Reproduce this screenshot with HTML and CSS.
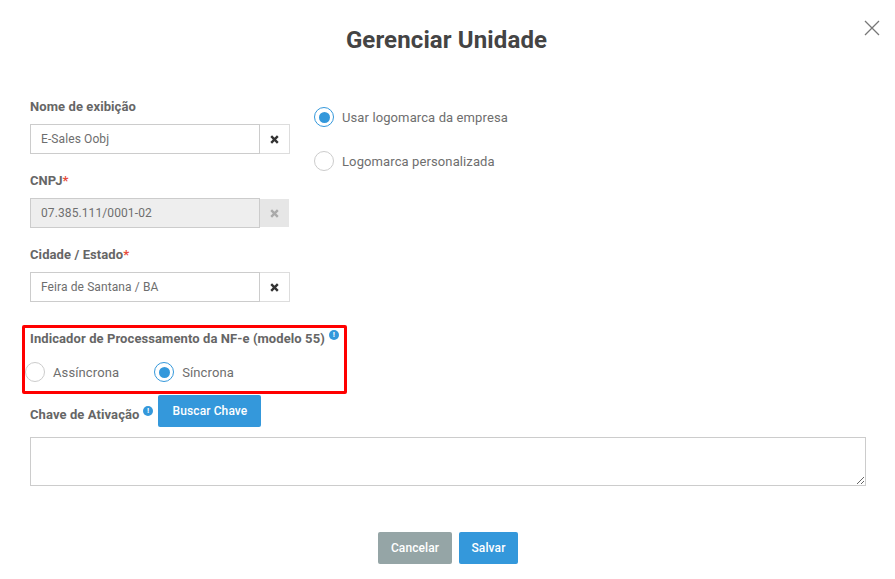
FILE: index.html
```html
<!DOCTYPE html>
<html lang="pt-BR">
<head>
<meta charset="utf-8">
<title>Gerenciar Unidade</title>
<link rel="stylesheet" href="styles.css">
</head>
<body>
<main class="modal">
  <button class="close" aria-label="Fechar">
    <svg width="16" height="16" viewBox="0 0 16 16"><path d="M1 1 15 15M15 1 1 15" stroke="#777" stroke-width="1.3" fill="none"/></svg>
  </button>
  <h1 class="title">Gerenciar Unidade</h1>
  <div class="top">
    <div class="fields">
      <div class="field">
        <label class="label">Nome de exibição</label>
        <div class="group">
          <div class="input">E-Sales Oobj</div>
          <div class="clear"><svg width="9" height="9" viewBox="0 0 9 9"><path d="M1.2 1.2 7.8 7.8M7.8 1.2 1.2 7.8" stroke="#333" stroke-width="2.4"/></svg></div>
        </div>
      </div>
      <div class="field">
        <label class="label">CNPJ<span class="req">*</span></label>
        <div class="group disabled">
          <div class="input">07.385.111/0001-02</div>
          <div class="clear"><svg width="9" height="9" viewBox="0 0 9 9"><path d="M1.2 1.2 7.8 7.8M7.8 1.2 1.2 7.8" stroke="#aaa" stroke-width="2.4"/></svg></div>
        </div>
      </div>
      <div class="field">
        <label class="label">Cidade / Estado<span class="req">*</span></label>
        <div class="group">
          <div class="input">Feira de Santana / BA</div>
          <div class="clear"><svg width="9" height="9" viewBox="0 0 9 9"><path d="M1.2 1.2 7.8 7.8M7.8 1.2 1.2 7.8" stroke="#333" stroke-width="2.4"/></svg></div>
        </div>
      </div>
    </div>
    <div class="logos">
      <div class="option"><span class="radio on"></span><span>Usar logomarca da empresa</span></div>
      <div class="option"><span class="radio"></span><span>Logomarca personalizada</span></div>
    </div>
  </div>
  <section class="marked">
    <div class="label marked-label">Indicador de Processamento da NF-e (modelo 55)<span class="info up">!</span></div>
    <div class="choices">
      <div class="option"><span class="radio"></span><span>Assíncrona</span></div>
      <div class="option"><span class="radio on"></span><span>Síncrona</span></div>
    </div>
  </section>
  <div class="key-row">
    <span class="label key-label">Chave de Ativação</span><span class="info">!</span>
    <button class="btn blue key-btn">Buscar Chave</button>
  </div>
  <textarea class="area"></textarea>
  <div class="actions">
    <button class="btn grey">Cancelar</button>
    <button class="btn blue">Salvar</button>
  </div>
</main>
</body>
</html>
```
FILE: styles.css
```css
* { box-sizing: border-box; }
html, body { margin: 0; height: 100%; background: #fff; }
body { font-family: Roboto, "Liberation Sans", sans-serif; color: #666; font-size: 13px; overflow: hidden; }
.modal { position: relative; width: 895px; height: 579px; padding: 25px 29px 0 30px; }
.close { position: absolute; top: 20px; right: 15px; padding: 0; border: 0; background: none; line-height: 0; }
.title { margin: 0; height: 30px; line-height: 30px; padding-right: 3px; text-align: center; font-size: 24px; font-weight: 700; color: #444; letter-spacing: .12px; }
.top { display: flex; margin-top: 44px; }
.fields { width: 260px; display: flex; flex-direction: column; gap: 19px; }
.label { font-weight: 700; font-size: 13px; line-height: 16px; color: #666; letter-spacing: .09px; }
.field .label { display: block; height: 16px; margin-bottom: 9px; }
.req { color: #e74c3c; }
.group { display: flex; height: 30px; }
.input { width: 230px; border: 1px solid #ccc; padding: 0 10px; line-height: 28px; font-size: 12px; color: #6e6e6e; letter-spacing: .1px; }
.clear { width: 30px; border: 1px solid #ddd; border-left: 0; display: flex; align-items: center; justify-content: center; }
.disabled .input { background: #eee; }
.disabled .clear { background: #e6e6e6; border-color: #e6e6e6; width: 29px; height: 28px; margin-top: 1px; }
.logos { margin-left: 24px; padding-top: 8px; display: flex; flex-direction: column; gap: 24px; }
.option { display: flex; align-items: center; gap: 8px; height: 20px; font-size: 13px; color: #6e6e6e; letter-spacing: .11px; }
.radio { width: 20px; height: 20px; border-radius: 50%; border: 1px solid #ccc; background: #fff; flex: none; display: flex; align-items: center; justify-content: center; }
.radio.on { border-color: #3498db; }
.radio.on::after { content: ""; width: 11px; height: 11px; border-radius: 50%; background: #3498db; }
.marked { width: 325px; height: 69px; margin: 23px 0 0 -8px; border: 3px solid #f00; border-radius: 2px; padding: 3px 0 0 5px; }
.marked-label { display: flex; align-items: flex-start; height: 16px; }
.info { display: inline-block; width: 10px; height: 10px; border-radius: 50%; background: #3498db; color: #fff; font-size: 8px; line-height: 10px; font-weight: 700; text-align: center; }
.info.up { margin: -1px 0 0 4px; }
.choices { display: flex; gap: 35px; margin: 15px 0 0 -5px; }
.key-row { display: flex; align-items: center; height: 32px; margin-top: 1px; }
.key-label { margin-top: 7px; }
.key-row .info { margin: 0 0 0 3.5px; }
.key-btn { width: 103px; margin: 0 0 0 5.5px; }
.btn { height: 32px; border: 0; border-radius: 2px; color: #fff; font: 500 12px Roboto, "Liberation Sans", sans-serif; letter-spacing: .1px; padding: 0; }
.btn.blue { background: #3498db; }
.btn.grey { background: #95a5a6; width: 74px; }
.area { display: block; width: 836px; height: 49px; margin-top: 10px; border: 1px solid #ccc; background: #fff; padding: 0; }
.actions { display: flex; justify-content: center; gap: 7px; margin-top: 46px; }
.actions .blue { width: 59px; }
```
